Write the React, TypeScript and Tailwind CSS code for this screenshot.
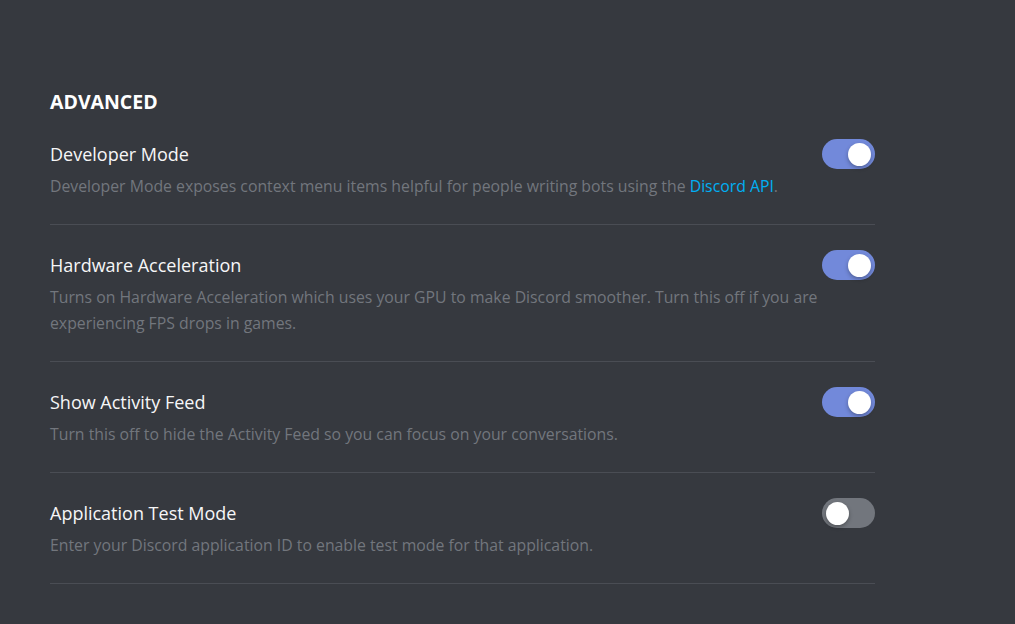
const rows = [
  {
    title: 'Developer Mode',
    desc: (
      <>
        Developer Mode exposes context menu items helpful for people writing bots using the{' '}
        <span className="text-[#00b0f4]">Discord API</span>.
      </>
    ),
    on: true,
  },
  {
    title: 'Hardware Acceleration',
    desc: 'Turns on Hardware Acceleration which uses your GPU to make Discord smoother. Turn this off if you are experiencing FPS drops in games.',
    on: true,
  },
  {
    title: 'Show Activity Feed',
    desc: 'Turn this off to hide the Activity Feed so you can focus on your conversations.',
    on: true,
  },
  {
    title: 'Application Test Mode',
    desc: 'Enter your Discord application ID to enable test mode for that application.',
    on: false,
  },
];

function Toggle({ on }: { on: boolean }) {
  return (
    <div
      className={`flex h-[30px] w-[53px] shrink-0 items-center rounded-full px-[4px] ${
        on ? 'justify-end bg-[#7289da]' : 'justify-start bg-[#72767d]'
      }`}
    >
      <div className="h-[23px] w-[23px] rounded-full bg-white shadow-[0_2px_4px_rgba(0,0,0,0.3)]" />
    </div>
  );
}

export default function App() {
  return (
    <div
      className="min-h-screen w-full bg-[#36393f] pl-[50px] pt-[89px]"
      style={{ fontFamily: '"Open Sans", "Noto Sans", sans-serif' }}
    >
      <div className="w-[825px]">
        <h2 className="text-[19.5px] font-bold uppercase leading-[25px] text-white">Advanced</h2>
        <div className="mt-[28px] flex flex-col">
          {rows.map((r, i) => (
            <div key={i} className={i > 0 ? 'pt-[28px]' : ''}>
              <div className="flex items-start justify-between">
                <div className="text-[18px] font-medium leading-[25px] text-[#f6f6f7]">{r.title}</div>
                <div className="-mt-[3px]">
                  <Toggle on={r.on} />
                </div>
              </div>
              <div className="mt-[4px] w-[780px] text-[15.8px] leading-[26px] text-[#72767d]">{r.desc}</div>
              <div className="mt-[25px] h-px bg-[#4a4d54]" />
            </div>
          ))}
        </div>
      </div>
    </div>
  );
}
